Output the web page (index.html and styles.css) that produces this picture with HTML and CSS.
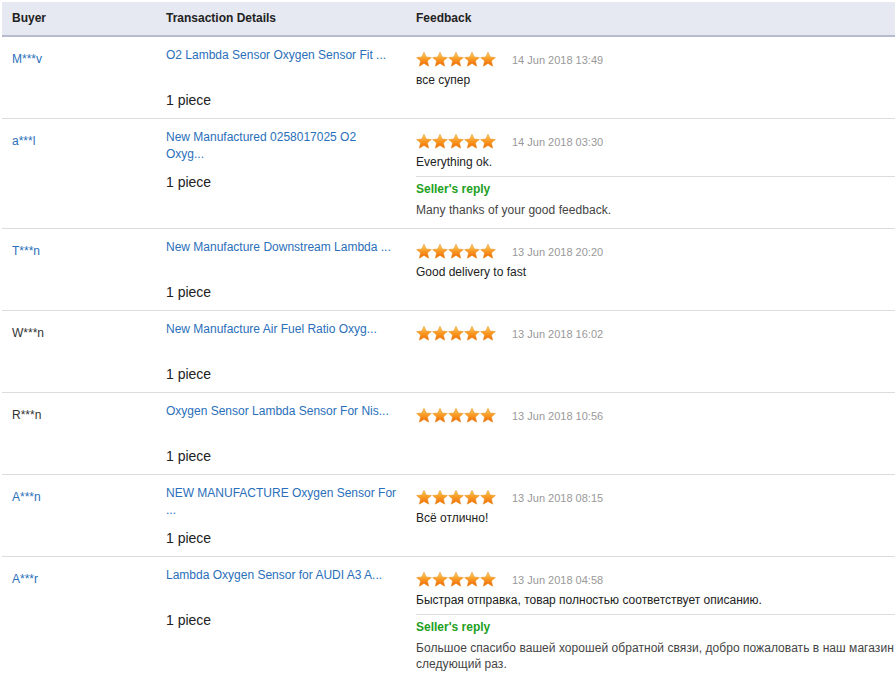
FILE: index.html
```html
<!DOCTYPE html>
<html>
<head>
<meta charset="utf-8">
<link rel="stylesheet" href="styles.css">
</head>
<body>
<svg width="0" height="0" class="defs">
  <defs>
    <linearGradient id="sg" x1="0" y1="0" x2="0" y2="1">
      <stop offset="0" stop-color="#ffcf5a"/>
      <stop offset="0.55" stop-color="#f99420"/>
      <stop offset="1" stop-color="#ee6a00"/>
    </linearGradient>
    <symbol id="star" viewBox="0 0 16 15">
      <polygon points="8,0.3 10.2,5 15.4,5.5 11.4,8.9 12.7,14.2 8,11.4 3.3,14.2 4.6,8.9 0.6,5.5 5.8,5" fill="url(#sg)" stroke="#e88a1a" stroke-width="0.5"/>
    </symbol>
    <symbol id="stars" viewBox="0 0 80 15">
      <use href="#star" x="0" y="0" width="16" height="15"/>
      <use href="#star" x="16" y="0" width="16" height="15"/>
      <use href="#star" x="32" y="0" width="16" height="15"/>
      <use href="#star" x="48" y="0" width="16" height="15"/>
      <use href="#star" x="64" y="0" width="16" height="15"/>
    </symbol>
  </defs>
</svg>
<div class="wrap">
  <div class="table">
    <div class="head">
      <div class="c1">Buyer</div>
      <div class="c2">Transaction Details</div>
      <div class="c3">Feedback</div>
    </div>

    <div class="row">
      <div class="buyer link">M***v</div>
      <div class="trans">
        <a class="title">O2 Lambda Sensor Oxygen Sensor Fit ...</a>
        <div class="qty">1 piece</div>
      </div>
      <div class="fb">
        <div class="rate"><svg class="stars" width="80" height="15"><use href="#stars"/></svg><span class="date">14 Jun 2018 13:49</span></div>
        <div class="comment">все супер</div>
      </div>
    </div>

    <div class="row">
      <div class="buyer link">a***l</div>
      <div class="trans">
        <a class="title">New Manufactured 0258017025 O2<br>Oxyg...</a>
        <div class="qty">1 piece</div>
      </div>
      <div class="fb">
        <div class="rate"><svg class="stars" width="80" height="15"><use href="#stars"/></svg><span class="date">14 Jun 2018 03:30</span></div>
        <div class="comment">Everything ok.</div>
        <div class="reply">
          <div class="reply-title">Seller's reply</div>
          <div class="reply-text">Many thanks of your good feedback.</div>
        </div>
      </div>
    </div>

    <div class="row">
      <div class="buyer link">T***n</div>
      <div class="trans">
        <a class="title">New Manufacture Downstream Lambda ...</a>
        <div class="qty">1 piece</div>
      </div>
      <div class="fb">
        <div class="rate"><svg class="stars" width="80" height="15"><use href="#stars"/></svg><span class="date">13 Jun 2018 20:20</span></div>
        <div class="comment">Good delivery to fast</div>
      </div>
    </div>

    <div class="row">
      <div class="buyer">W***n</div>
      <div class="trans">
        <a class="title">New Manufacture Air Fuel Ratio Oxyg...</a>
        <div class="qty">1 piece</div>
      </div>
      <div class="fb">
        <div class="rate"><svg class="stars" width="80" height="15"><use href="#stars"/></svg><span class="date">13 Jun 2018 16:02</span></div>
      </div>
    </div>

    <div class="row">
      <div class="buyer">R***n</div>
      <div class="trans">
        <a class="title">Oxygen Sensor Lambda Sensor For Nis...</a>
        <div class="qty">1 piece</div>
      </div>
      <div class="fb">
        <div class="rate"><svg class="stars" width="80" height="15"><use href="#stars"/></svg><span class="date">13 Jun 2018 10:56</span></div>
      </div>
    </div>

    <div class="row">
      <div class="buyer link">A***n</div>
      <div class="trans">
        <a class="title">NEW MANUFACTURE Oxygen Sensor For<br>...</a>
        <div class="qty">1 piece</div>
      </div>
      <div class="fb">
        <div class="rate"><svg class="stars" width="80" height="15"><use href="#stars"/></svg><span class="date">13 Jun 2018 08:15</span></div>
        <div class="comment">Всё отлично!</div>
      </div>
    </div>

    <div class="row">
      <div class="buyer link">A***r</div>
      <div class="trans">
        <a class="title">Lambda Oxygen Sensor for AUDI A3 A...</a>
        <div class="qty">1 piece</div>
      </div>
      <div class="fb">
        <div class="rate"><svg class="stars" width="80" height="15"><use href="#stars"/></svg><span class="date">13 Jun 2018 04:58</span></div>
        <div class="comment">Быстрая отправка, товар полностью соответствует описанию.</div>
        <div class="reply">
          <div class="reply-title">Seller's reply</div>
          <div class="reply-text">Большое спасибо вашей хорошей обратной связи, добро пожаловать в наш магазин следующий раз.</div>
        </div>
      </div>
    </div>
  </div>
</div>
</body>
</html>
```

FILE: styles.css
```css
html, body {
  margin: 0;
  padding: 0;
  overflow: hidden;
  background: #fff;
}
body {
  font-family: "Liberation Sans", Arial, sans-serif;
  font-size: 12px;
  color: #333;
}
.defs {
  position: absolute;
  width: 0;
  height: 0;
}
.wrap {
  padding: 2px 0 0 2px;
  width: 1000px;
}
.table {
  width: 930px;
}
.head {
  display: grid;
  grid-template-columns: 154px 250px 1fr;
  height: 33px;
  line-height: 33px;
  background: #e6e8f2;
  border-bottom: 2px solid #b7bbcd;
  font-weight: bold;
  color: #222;
}
.head > div {
  padding-left: 10px;
}
.row {
  display: grid;
  grid-template-columns: 154px 250px 1fr;
  border-bottom: 1px solid #dcdcdc;
}
.buyer {
  padding: 13px 10px 0;
  line-height: 18px;
  color: #333;
}
.buyer.link {
  color: #2a6fba;
}
.trans {
  padding: 10px 10px 9px;
}
.title {
  display: block;
  width: 236px;
  height: 34px;
  line-height: 17px;
  color: #2a6fba;
  text-decoration: none;
}
.qty {
  margin-top: 10px;
  font-size: 14px;
  line-height: 18px;
  color: #222;
}
.fb {
  padding: 10px 10px 10px;
}
.rate {
  display: flex;
  align-items: center;
  height: 24px;
  padding-top: 1px;
  box-sizing: border-box;
}
.stars {
  display: block;
  width: 80px;
  height: 15px;
  margin-top: -1px;
}
.date {
  margin-left: 16px;
  font-size: 11px;
  color: #999;
}
.comment {
  line-height: 18px;
  color: #222;
}
.reply {
  margin-top: 5px;
  border-top: 1px solid #dcdcdc;
  padding-top: 3px;
}
.reply-title {
  line-height: 18px;
  font-weight: bold;
  color: #22a022;
}
.reply-text {
  margin-top: 4px;
  line-height: 16px;
  color: #444;
  letter-spacing: 0.05px;
}
```
